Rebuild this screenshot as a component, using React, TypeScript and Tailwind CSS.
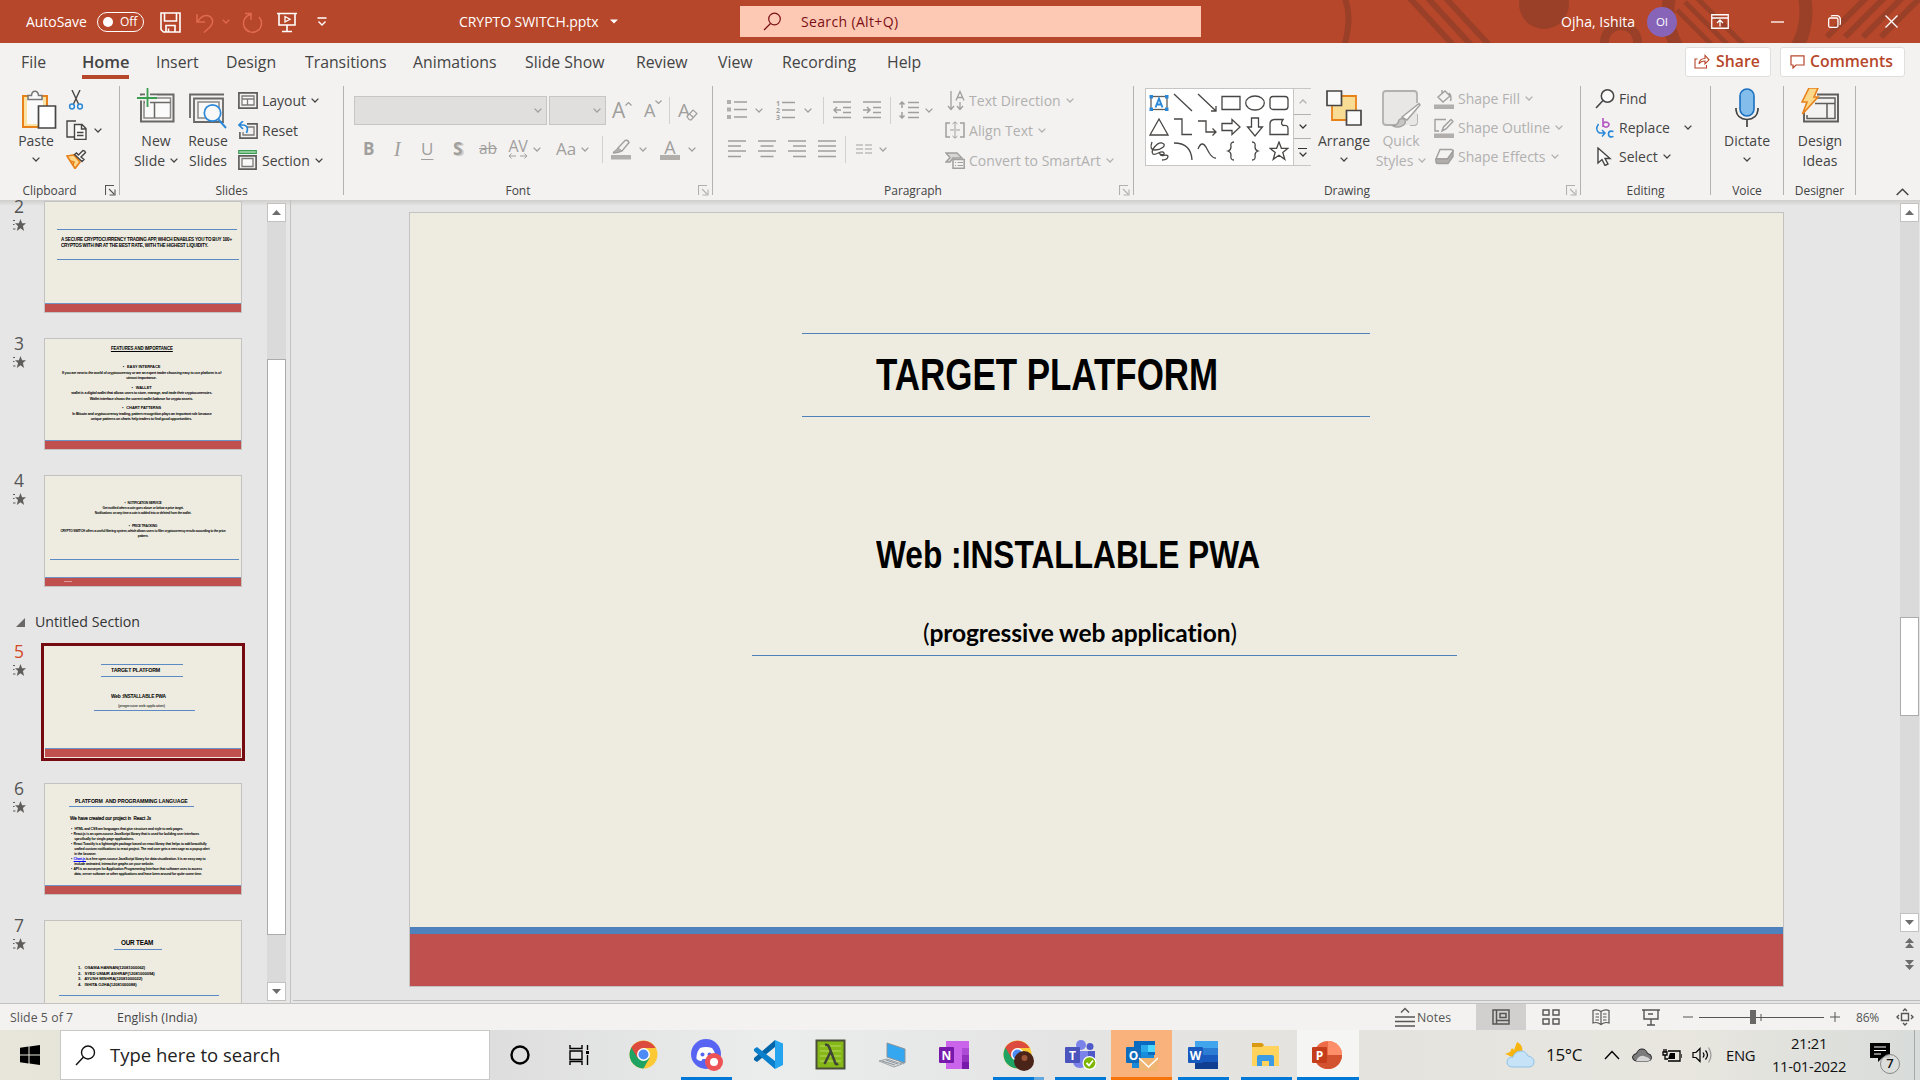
import type { ReactNode } from "react";

type SvgProps = { w: number; h: number; className?: string; children?: ReactNode };

function Svg({ w, h, className = "", children }: SvgProps) {
  return (
    <svg
      width={w}
      height={h}
      viewBox={`0 0 ${w} ${h}`}
      fill="none"
      stroke="currentColor"
      className={`block shrink-0 ${className}`}
      aria-hidden="true"
    >
      {children}
    </svg>
  );
}

function Chevron({ className = "" }: { className?: string }) {
  return (
    <Svg w={8} h={5} className={className}>
      <path d="M.6.6 4 4 7.4.6" strokeWidth="1.3" />
    </Svg>
  );
}

/* ---------- Title bar ---------- */

function TitleBar() {
  return (
    <header className="relative flex h-[43px] shrink-0 items-center overflow-hidden bg-[#b7472a] text-[14px] text-white">
      <svg className="pointer-events-none absolute top-0 right-0" width="580" height="43" viewBox="0 0 580 43" fill="none" stroke="#9a4029">
        <path d="M4-4C10 10 10 24 4 48M66-6l48 52M84-6l48 52M102-6l48 52" strokeWidth="6" />
        <circle cx="204" cy="4" r="25" fill="#9a4029" stroke="none" />
        <circle cx="281" cy="42" r="16.500" strokeWidth="9" />
        <circle cx="397" cy="12" r="69" strokeWidth="13" />
        <path d="M337 10l40 40M345 2l48 48M353-6l56 56" strokeWidth="5" />
        <path d="M487 37L530-6M505 37L548-6M523 37L566-6M541 37L584-6" strokeWidth="6" />
      </svg>
      <div className="relative flex w-full items-center">
        <span className="ml-[26px] w-[63px] tracking-[-0.05px] whitespace-nowrap">AutoSave</span>
        <span className="ml-[8px] flex h-[20px] w-[47px] items-center rounded-full border border-white pl-[5px] text-[12px]">
          <span className="mr-[7px] size-[10px] rounded-full bg-white" />
          Off
        </span>
        <Svg w={21} h={21} className="ml-[16px] mt-[2px]">
          <path d="M1 1h19v19H3.5L1 17.500zM4.500 1v8h12V1M6 20v-6.500h9V20M8.500 20v-3.500" strokeWidth="1.600" />
        </Svg>
        <Svg w={20} h={22} className="ml-[14px] mt-[2px] text-[#e06a4e]">
          <path d="M2 2v8h8M2.500 9.500C6 4 11 2 15 4.500c4 3 3 7.500 0 10.500l-6 5.500" strokeWidth="1.500" />
        </Svg>
        <Chevron className="ml-[7px] text-[#e06a4e]" />
        <Svg w={22} h={22} className="ml-[12px] mt-[2px] text-[#e06a4e]">
          <path d="M3 1.500h6V8M8.500 2.500A9 9 0 1 0 17 5" strokeWidth="1.500" />
        </Svg>
        <Svg w={20} h={21} className="ml-[13px] mt-[2px]">
          <path d="M0 1.500h20M2 1.500V13h16V1.500M10 13v6M5 19.500h10" strokeWidth="1.600" />
          <path d="M8 4.500v5.500l5-2.750z" strokeWidth="1.300" />
        </Svg>
        <Svg w={10} h={9} className="ml-[20px]">
          <path d="M.5 1h9M1.500 4.500 5 8l3.500-3.500" strokeWidth="1.400" />
        </Svg>
        <span className="ml-[132px] w-[143px] tracking-[-0.05px] whitespace-nowrap">CRYPTO SWITCH.pptx</span>
        <Svg w={8} h={5} className="ml-[8px]">
          <path d="M0 .5h8L4 4.500z" fill="currentColor" stroke="none" />
        </Svg>
        <div className="ml-[122px] flex h-[31px] w-[461px] items-center bg-[#fdc9b5] text-[#7c0f15]">
          <Svg w={19} h={19} className="ml-[23px]">
            <circle cx="11.500" cy="7" r="5.800" strokeWidth="1.200" />
            <path d="M7.500 11.500 1 18" strokeWidth="1.200" />
          </Svg>
          <span className="ml-[19px] tracking-[0.35px] whitespace-nowrap">Search (Alt+Q)</span>
        </div>
        <span className="ml-[360px] w-[74px] tracking-[0.05px] whitespace-nowrap">Ojha, Ishita</span>
        <span className="ml-[12px] flex size-[30px] items-center justify-center rounded-full bg-[#8764b8] text-[11.500px]">OI</span>
        <Svg w={18} h={15} className="ml-[34px]">
          <path d="M.75.75h16.500v13.500H.75zM.75 4h16.500M9 12.500V6.500M6 9l3-3 3 3" strokeWidth="1.300" />
        </Svg>
        <Svg w={13} h={2} className="ml-[42px]">
          <path d="M0 1h13" strokeWidth="1.300" />
        </Svg>
        <Svg w={13} h={13} className="ml-[44px]">
          <rect x=".65" y="3" width="9.300" height="9.300" rx="1.500" strokeWidth="1.300" />
          <path d="M3 1.200Q3.500.7 4.500.7H9a3.300 3.300 0 0 1 3.300 3.300v4.500q0 .8-.6 1.300" strokeWidth="1.300" />
        </Svg>
        <Svg w={13} h={13} className="ml-[44px]">
          <path d="M.5.5l12 12M12.500.5l-12 12" strokeWidth="1.300" />
        </Svg>
      </div>
    </header>
  );
}

const tabs = [
  { label: "File", width: "w-[61px]" },
  { label: "Home", width: "w-[74px]" },
  { label: "Insert", width: "w-[70px]" },
  { label: "Design", width: "w-[79px]" },
  { label: "Transitions", width: "w-[108px]" },
  { label: "Animations", width: "w-[112px]" },
  { label: "Slide Show", width: "w-[111px]" },
  { label: "Review", width: "w-[82px]" },
  { label: "View", width: "w-[64px]" },
  { label: "Recording", width: "w-[105px]" },
  { label: "Help", width: "w-[60px]" },
];

function TabRow() {
  return (
    <nav className="flex h-[37px] shrink-0 items-center pl-[21px] text-[15.800px] text-[#444]">
      {tabs.map((tab) => (
        <span key={tab.label} className={`${tab.width} flex h-full shrink-0 items-start whitespace-nowrap`}>
          {tab.label === "Home" ? (
            <b className="h-[36px] border-b-4 border-[#b7472a] pt-[7px] text-[16.500px] font-semibold tracking-[-0.1px]">{tab.label}</b>
          ) : (
            <span className="pt-[8px]">{tab.label}</span>
          )}
        </span>
      ))}
      <div className="ml-auto flex gap-[9px] pr-[15px] font-semibold text-[#b7472a]">
        <span className="flex h-[30px] w-[86px] items-center rounded-[3px] border border-[#e1dfdd] bg-white pl-[8px]">
          <Svg w={16} h={15} className="mr-[6px]">
            <path d="M3.500 5H1v9h11.500v-3M5 10c.3-4 2.500-5.500 6-5.500V1.500l4 4.300-4 4V7C8 7 6.500 7.500 5 10z" strokeWidth="1.100" />
          </Svg>
          Share
        </span>
        <span className="flex h-[30px] w-[125px] items-center rounded-[3px] border border-[#e1dfdd] bg-white pl-[9px]">
          <Svg w={15} h={14} className="mr-[5px]">
            <path d="M1 .8h13v9.200H6L3 13v-3H1z" strokeWidth="1.200" />
          </Svg>
          Comments
        </span>
      </div>
    </nav>
  );
}

/* ---------- Ribbon ---------- */

function Launcher({ dim = false }: { dim?: boolean }) {
  return (
    <Svg w={11} h={11} className={dim ? "text-[#b1b0af]" : "text-[#555]"}>
      <path d="M.5 10V.5H9M4 4l5 5M10 4.500V10H4.500" strokeWidth="1.100" />
    </Svg>
  );
}

type GroupProps = { label: string; width: string; launcher?: "on" | "dim"; children: ReactNode };

function Group({ label, width, launcher, children }: GroupProps) {
  return (
    <section className={`${width} flex shrink-0`}>
      <div className="flex min-w-0 flex-1 flex-col">
        <div className="flex h-[100px]">{children}</div>
        <div className={`relative flex h-[20px] items-center justify-center pt-[2px] text-[12px] tracking-[-0.05px] text-[#444] ${launcher ? "pr-[20px]" : ""}`}>
          {label}
          {launcher && (
            <span className="absolute top-[5px] right-[3px]">
              <Launcher dim={launcher === "dim"} />
            </span>
          )}
        </div>
      </div>
      <div className="mt-[6px] h-[109px] w-px bg-[#b3b2b1]" />
    </section>
  );
}

type BigProps = { icon: ReactNode; lines: string[]; chevron?: boolean; className?: string };

function BigButton({ icon, lines, chevron = false, className = "" }: BigProps) {
  return (
    <div className={`flex shrink-0 flex-col items-center pt-[8px] text-[14px] ${className}`}>
      <div className="flex h-[42px] items-start">{icon}</div>
      {lines.map((line, i) => (
        <span key={line} className="flex h-5 items-center gap-[5px] whitespace-nowrap">
          {line}
          {chevron && i === 1 && <Chevron />}
        </span>
      ))}
      {chevron && lines.length === 1 && <Chevron className="mt-[7px]" />}
    </div>
  );
}

type SmallProps = { icon: ReactNode; text: string; chevron?: boolean; gap?: string; className?: string };

function SmallButton({ icon, text, chevron = false, gap = "ml-[5px]", className = "h-[30px]" }: SmallProps) {
  return (
    <div className={`flex items-center text-[14px] whitespace-nowrap ${className}`}>
      <span className="flex w-[24px] justify-start">{icon}</span>
      {text}
      {chevron && <Chevron className={gap} />}
    </div>
  );
}

function ClipboardGroup() {
  return (
    <Group label="Clipboard" width="w-[120px]" launcher="on">
      <BigButton
        className="ml-[16px] w-[40px]"
        chevron
        lines={["Paste"]}
        icon={
          <Svg w={36} h={40} className="ml-[6px] mt-[2px]">
            <path d="M2 6h24v31H2z" fill="#fbe3a5" stroke="#e8811a" strokeWidth="2" />
            <path d="M6 9h16v25H6z" fill="#fafafa" stroke="none" />
            <path d="M7 9.500V5.500h3.500C11-.3 17-.3 17.500 5.500H21v4z" fill="#fafafa" stroke="#777" strokeWidth="1.500" />
            <path d="M17.500 16h17v22h-17z" fill="#fff" stroke="#484644" strokeWidth="1.700" />
          </Svg>
        }
      />
      <div className="ml-[10px] flex flex-col pt-[10px]">
        <Svg w={20} h={20}>
          <path d="M6 0l6.500 14M14 0L7.500 14" stroke="#484644" strokeWidth="1.400" />
          <circle cx="6" cy="16.500" r="2.400" stroke="#2b88d8" strokeWidth="1.500" />
          <circle cx="14" cy="16.500" r="2.400" stroke="#2b88d8" strokeWidth="1.500" />
        </Svg>
        <div className="mt-[10px] flex items-center">
          <Svg w={21} h={20} className="text-[#484644]">
            <path d="M8 17H1V1h9" strokeWidth="1.400" />
            <path d="M8.500 4.500h7.500l4 4v11H8.500zM15.500 4.500V9H20M11 12.500h6.500M11 15.500h6.500" fill="#fafafa" strokeWidth="1.400" />
          </Svg>
          <Chevron className="ml-[7px]" />
        </div>
        <Svg w={21} h={20} className="mt-[9px]">
          <path d="M1 7l7-1 6 7-5 6.500z" fill="#fbd88a" stroke="#e8811a" strokeWidth="1.700" />
          <path d="M4 12l4 1-1 3" stroke="#e8811a" strokeWidth="1.500" />
          <path d="M8.500 5.500l7.500 7 2-2-3-2.500 4.500-4.500q-.5-2-2.500-2L12.500 6 10.500 4z" fill="#fafafa" stroke="#484644" strokeWidth="1.400" />
        </Svg>
      </div>
    </Group>
  );
}

function SlidesGroup() {
  return (
    <Group label="Slides" width="w-[224px]">
      <BigButton
        className="ml-[11px] w-[50px]"
        chevron
        lines={["New", "Slide"]}
        icon={
          <Svg w={38} h={36}>
            <path d="M4 6.500h32.500v27H4z" stroke="#6a6866" strokeWidth="2" />
            <path d="M7 10h26.500v20H7z" fill="#fafafa" stroke="#8a8886" strokeWidth="1.500" />
            <path d="M7 14.500h26.500M17.500 14.500V30" stroke="#6a6866" strokeWidth="1.500" />
            <path d="M10.500 0v19M0 10h20" stroke="#f3f2f1" strokeWidth="5" />
            <path d="M10.500 0v19M0 10h20" stroke="#3c9e53" strokeWidth="1.800" />
          </Svg>
        }
      />
      <BigButton
        className="ml-[5px] w-[44px]"
        lines={["Reuse", "Slides"]}
        icon={
          <Svg w={38} h={36} className="mt-[5px]">
            <path d="M1 25V1.500h34" stroke="#6a6866" strokeWidth="1.800" />
            <path d="M5 29V5.500h29V29z" stroke="#6a6866" strokeWidth="1.800" />
            <path d="M9 9h21v16H9z" fill="#fafafa" stroke="#8a8886" strokeWidth="1.500" />
            <circle cx="23.500" cy="20" r="8.200" fill="#f8f8f8" stroke="#2b88d8" strokeWidth="1.700" />
            <path d="M29.500 26.500 37 35" stroke="#2b88d8" strokeWidth="1.900" />
          </Svg>
        }
      />
      <div className="ml-[8px] flex flex-col pt-[5px]">
        <SmallButton
          text="Layout"
          chevron
          icon={
            <Svg w={20} h={17}>
              <path d="M.9.9h18.200v15.200H.9z" stroke="#5f5d5b" strokeWidth="1.700" />
              <path d="M4 4h12v9H4zM4 7h12M9.500 7v6" fill="#fafafa" stroke="#7d7b79" strokeWidth="1.300" />
            </Svg>
          }
        />
        <SmallButton
          text="Reset"
          icon={
            <Svg w={20} h={18}>
              <path d="M9 2.900h10.100v14.200H1.900V11" stroke="#5f5d5b" strokeWidth="1.600" />
              <path d="M9 6h7v8H5v-3" stroke="#7d7b79" strokeWidth="1.300" />
              <path d="M5 0L1 4l4 4M1 4h4c4 0 5.500 3 3.500 8" stroke="#2b88d8" strokeWidth="1.700" />
            </Svg>
          }
        />
        <SmallButton
          text="Section"
          chevron
          icon={
            <Svg w={20} h={20}>
              <path d="M.7.7h17.600v2.600H.7z" fill="#a9d7b3" stroke="#3c9e53" strokeWidth="1.200" />
              <path d="M.9 5.900h17.200v13.200H.9z" stroke="#5f5d5b" strokeWidth="1.700" />
              <path d="M4 8.500h11v8H4z" fill="#fafafa" stroke="#7d7b79" strokeWidth="1.300" />
            </Svg>
          }
        />
      </div>
    </Group>
  );
}

function VLine({ className = "" }: { className?: string }) {
  return <span className={`h-[27px] w-px shrink-0 bg-[#d2d0ce] ${className}`} />;
}

function FontGroup() {
  return (
    <Group label="Font" width="w-[369px]" launcher="dim">
      <div className="flex flex-col pl-[10px] text-[#a19f9d]">
        <div className="mt-[15px] flex h-[30px] items-center">
          <div className="flex h-[29px] w-[193px] items-center justify-end border border-[#c8c6c4] bg-[#e0dfde] pr-[4px]">
            <Chevron />
          </div>
          <div className="ml-[2px] flex h-[29px] w-[57px] items-center justify-end border border-[#c8c6c4] bg-[#e0dfde] pr-[4px]">
            <Chevron />
          </div>
          <span className="ml-[6px] flex w-[32px] items-start text-[21px] leading-[22px]">
            A<Svg w={7} h={4} className="mt-[3px]"><path d="M.5 3.500l3-3 3 3" strokeWidth="1.200" /></Svg>
          </span>
          <span className="flex w-[25px] items-start text-[18px] leading-[24px]">
            A<Svg w={7} h={4} className="mt-[2px]"><path d="M.5.5l3 3 3-3" strokeWidth="1.200" /></Svg>
          </span>
          <VLine />
          <span className="ml-[8px] flex items-end text-[19px] leading-[22px]">
            A
            <Svg w={12} h={12} className="-ml-[4px]">
              <path d="M1 7.500L7 1l4 3.500L5 11 3 10.500z" fill="#f3f2f1" strokeWidth="1.200" />
              <path d="M3.500 5l4 3.500" strokeWidth="1.200" />
            </Svg>
          </span>
        </div>
        <div className="mt-[9px] flex h-[30px] items-center text-[17px]">
          <b className="ml-[9px] w-[31px]">B</b>
          <i className="w-[27px] font-['Liberation_Serif',serif] text-[20px]">I</i>
          <span className="w-[32px] underline underline-offset-[4px]">U</span>
          <b className="w-[26px] [text-shadow:2px_1px_1px_#c8c6c4]">S</b>
          <span className="w-[29px] text-[15.500px] line-through">ab</span>
          <span className="flex w-[20px] flex-col items-center text-[16px] leading-[14px] tracking-[-0.3px]">
            AV
            <Svg w={20} h={6}>
              <path d="M8 3H1m2.500-2.500L1 3l2.500 2.500M12 3h7m-2.500-2.500L19 3l-2.500 2.500" />
            </Svg>
          </span>
          <Chevron className="ml-[5px]" />
          <span className="ml-[15px] w-[24px] text-[17px]">Aa</span>
          <Chevron className="ml-[1px]" />
          <VLine className="ml-[13px]" />
          <Svg w={20} h={21} className="ml-[8px]">
            <path d="M0 16h20v4.500H0z" fill="#b1aeab" stroke="none" />
            <path d="M7 9L14 1.500q3-1 4 2L11 12l-5 1.500-4 .5 4-2z" strokeWidth="1.400" />
            <path d="M7 9l4 3-4 1.500H2z" fill="#b1aeab" />
          </Svg>
          <Chevron className="ml-[8px]" />
          <span className="ml-[13px] flex w-[20px] flex-col items-center text-[18px] leading-[16px]">
            A
            <span className="h-[5px] w-[20px] bg-[#b1aeab]" />
          </span>
          <Chevron className="ml-[8px]" />
        </div>
      </div>
    </Group>
  );
}

function Lines({ d, w = 18, className = "" }: { d: string; w?: number; className?: string }) {
  return (
    <Svg w={w} h={18} className={className}>
      <path d={d} strokeWidth="1.500" />
    </Svg>
  );
}

function ParagraphGroup() {
  return (
    <Group label="Paragraph" width="w-[421px]" launcher="dim">
      <div className="flex w-[232px] shrink-0 flex-col pl-[14px] text-[#a19f9d]">
        <div className="mt-[15px] flex h-[30px] items-center">
          <Svg w={20} h={20}>
            <path d="M0 0h4v4H0zM0 7.500h4v4H0zM0 15h4v4H0z" fill="#b1aeab" stroke="none" />
            <path d="M7 2h13M7 9.500h13M7 17h13" strokeWidth="1.500" />
          </Svg>
          <Chevron className="ml-[8px]" />
          <span className="ml-[13px] flex w-[6px] flex-col text-[7px] leading-[7px] font-bold">
            <span>1</span>
            <span>2</span>
            <span>3</span>
          </span>
          <Lines w={13} d="M0 1.500h13M0 9h13M0 16.500h13" />
          <Chevron className="ml-[9px]" />
          <VLine className="ml-[11px]" />
          <Lines className="ml-[9px]" d="M0 1h18M10 6.500h8M10 11.500h8M0 16.500h18M8 9H1m3-3L1 9l3 3" />
          <Lines className="ml-[12px]" d="M0 1h18M10 6.500h8M10 11.500h8M0 16.500h18M0 9h7M4 6l3 3-3 3" />
          <VLine className="ml-[9px]" />
          <Lines w={20} className="ml-[8px]" d="M9 1.500h11M9 6.500h11M9 11.500h11M9 16.500h11M3 1v6M.5 3.500L3 1l2.500 2.500M3 17v-6M.5 14.500L3 17l2.500-2.500" />
          <Chevron className="ml-[6px]" />
        </div>
        <div className="mt-[9px] flex h-[30px] items-center">
          <Lines className="ml-[1px]" d="M0 1h18M0 6h13M0 11h18M0 16.500h13" />
          <Lines className="ml-[12px]" d="M0 1h18M2.500 6h13M0 11h18M2.500 16.500h13" />
          <Lines className="ml-[12px]" d="M0 1h18M5 6h13M0 11h18M5 16.500h13" />
          <Lines className="ml-[12px]" d="M0 1h18M0 6h18M0 11h18M0 16.500h18" />
          <VLine className="ml-[9px]" />
          <Svg w={16} h={18} className="ml-[10px]">
            <path d="M0 5h7M0 9h7M0 13h7M9 5h7M9 9h7M9 13h7" strokeWidth="1.200" />
          </Svg>
          <Chevron className="ml-[7px]" />
        </div>
      </div>
      <div className="flex flex-col pt-[5px] tracking-[0.05px] text-[#b1b0af]">
        <SmallButton
          text="Text Direction"
          chevron
          icon={
            <Svg w={20} h={21} className="text-[#a19f9d]">
              <path d="M6 1v18M3 16l3 3.500L9 16M15 12v7M12 16l3 3.500 3-3.500M11 10.500l4-9 4 9M12.500 7.500h5" strokeWidth="1.300" />
            </Svg>
          }
        />
        <SmallButton
          text="Align Text"
          chevron
          icon={
            <Svg w={20} h={18} className="text-[#a19f9d]">
              <path d="M5 2H1v14h4M15 2h4v14h-4" strokeWidth="1.500" />
              <path d="M10 8V1M7.500 3L10 .8 12.500 3M10 10v7M7.500 15l2.500 2.200 2.500-2.200M5 9h10" />
            </Svg>
          }
        />
        <SmallButton
          text="Convert to SmartArt"
          chevron
          icon={
            <Svg w={20} h={17} className="text-[#a19f9d]">
              <path d="M1 1h11l5 5h-9l-3 4H1l4-4.500z" fill="#d8d6d4" strokeWidth="1.400" />
              <path d="M8 7.500h11.200v8.700H8z" fill="#f3f2f1" strokeWidth="1.500" />
              <path d="M10 10.500h1M12.500 10.500H18M10 13.500h1M12.500 13.500H18" />
            </Svg>
          }
        />
      </div>
    </Group>
  );
}

const shapes: ReactNode[] = [
  <>
    <rect x="2" y="3.500" width="16" height="13" stroke="#5f5d5b" strokeWidth="1.300" />
    <path d="M6.500 14.500l3.500-9 3.500 9M7.700 11.500h4.600" stroke="#2b88d8" strokeWidth="1.900" />
    <path d="M.5 2h3.500v3.500H.5zM16 2h3.500v3.500H16zM.5 14.500h3.500V18H.5zM16 14.500h3.500V18H16z" fill="#2b88d8" stroke="none" />
  </>,
  <path d="M1 1l18 17" />,
  <path d="M1 1l18 17M19 13v5h-5" />,
  <path d="M1 3.500h18v13H1z" />,
  <ellipse cx="10" cy="10" rx="9.300" ry="7" />,
  <rect x="1" y="3.500" width="18" height="13" rx="3" />,
  <path d="M10 2l9 16H1z" />,
  <path d="M1 2h8v15.500h10" />,
  <path d="M1 4h8v11h10M15.500 11.500L19 15l-3.500 3.500" />,
  <path d="M1 6.500h10V2.500l8 7.500-8 7.500v-4H1z" />,
  <path d="M6.500 1h7v9h4L10 19l-7.500-9h4z" />,
  <path d="M1 17.500V7q0-4 4-4.500h9q-3 4 0 6 5-1 5 3v6z" />,
  <path d="M3 1q-3 8 3 8C12 9 19 4 13 2 8 1 1 10 4 13c3 2 9-5 11-1 1 2-3 2-4 1 1 4 6-1 8 2 0 3-3 4-6 4" />,
  <path d="M1 2q17 0 18 17" />,
  <path d="M1 8Q5-2 10 8t9 9" />,
  <path d="M13 1q-4 0-3 5 0 3-3 4 3 1 3 4-1 5 3 5" />,
  <path d="M7 1q4 0 3 5 0 3 3 4-3 1-3 4 1 5-3 5" />,
  <path d="M10 1l2.400 6.300H19l-5.200 4.200 2 6.800L10 14.300l-5.800 4 2-6.800L1 7.300h6.600z" />,
];

function DrawingGroup() {
  return (
    <Group label="Drawing" width="w-[447px]" launcher="dim">
      <div className="ml-[11px] mt-[8px] flex h-[78px] w-[166px] shrink-0 border border-[#c8c6c4] bg-white">
        <div className="grid flex-1 grid-cols-[repeat(6,24px)] content-start gap-y-[4px] pl-[3px] pt-[4px] text-[#484644]">
          {shapes.map((shape, i) => (
            <Svg key={i} w={20} h={20}>
              <g strokeWidth="1.300">{shape}</g>
            </Svg>
          ))}
        </div>
        <div className="flex w-[18px] shrink-0 flex-col border-l border-[#c8c6c4] bg-[#f3f2f1] text-[#333]">
          <span className="flex h-[25px] items-center justify-center text-[#b1b0af]">
            <Chevron className="rotate-180" />
          </span>
          <span className="flex h-[25px] items-center justify-center border-y border-[#b3b2b1]">
            <Chevron />
          </span>
          <span className="flex flex-1 flex-col items-center justify-center gap-[3px]">
            <span className="h-px w-[9px] bg-[#333]" />
            <Chevron />
          </span>
        </div>
      </div>
      <BigButton
        className="ml-[5px] w-[56px]"
        chevron
        lines={["Arrange"]}
        icon={
          <Svg w={36} h={37} className="mt-[2px]">
            <path d="M6 6h24v24H6z" fill="#f9dc93" stroke="#e8811a" strokeWidth="1.800" />
            <path d="M1 1h14.500v14.500H1zM20.500 20.500H35V35H20.500z" fill="#fafafa" stroke="#484644" strokeWidth="1.700" />
          </Svg>
        }
      />
      <BigButton
        className="ml-[2px] w-[54px] text-[#b1b0af]"
        chevron
        lines={["Quick", "Styles"]}
        icon={
          <Svg w={39} h={39} className="mt-[2px]">
            <path d="M13 35H4q-3 0-3-3V4q0-3 3-3h28q3 0 3 3v9M35 24v8q0 3-3 3h-4" fill="#e8e7e6" strokeWidth="1.800" />
            <path d="M35 13v20q-1 2-3 2H13z" fill="#e8e7e6" stroke="none" />
            <path d="M11 36q5-1 6-6 3-3 6 0c2 5-6 9-12 6z" fill="#c8c6c4" stroke="#a19f9d" strokeWidth="1.300" />
            <path d="M20 27L37 13.500l1 1.500-13 15z" fill="#fafafa" stroke="#a19f9d" strokeWidth="1.400" />
          </Svg>
        }
      />
      <div className="ml-[6px] flex flex-col pt-[4px] text-[#b1b0af]">
        <SmallButton
          className="h-[29px]"
          text="Shape Fill"
          chevron
          icon={
            <Svg w={20} h={20} className="text-[#a19f9d]">
              <path d="M0 15.500h20V20H0z" fill="#b1aeab" stroke="none" />
              <path d="M4 8l7-6 5 5-7 6zM8 5V1M15 4q3 3 1.500 8" strokeWidth="1.400" />
            </Svg>
          }
        />
        <SmallButton
          className="h-[29px]"
          text="Shape Outline"
          chevron
          icon={
            <Svg w={20} h={20} className="text-[#a19f9d]">
              <path d="M0 15.500h20V20H0z" fill="#b1aeab" stroke="none" />
              <path d="M12 1.500H1V13h4M8 13l1.500-4L17 1.500l2 2L12 11z" strokeWidth="1.400" />
            </Svg>
          }
        />
        <SmallButton
          className="h-[29px]"
          text="Shape Effects"
          chevron
          icon={
            <Svg w={20} h={17} className="text-[#a19f9d]">
              <path d="M6 1.500h11.500q1.500.5 1.500 2L13.500 11H2z" fill="#f3f2f1" strokeWidth="1.400" />
              <path d="M2 11h11.500L19 3.500v5L14 15.500H3q-1.500-1-1-4.500z" fill="#b1aeab" strokeWidth="1.400" />
            </Svg>
          }
        />
      </div>
    </Group>
  );
}

function Ribbon() {
  return (
    <div className="flex h-[120px] shrink-0 text-[#444]">
      <ClipboardGroup />
      <SlidesGroup />
      <FontGroup />
      <ParagraphGroup />
      <DrawingGroup />
      <Group label="Editing" width="w-[130px]">
        <div className="ml-[14px] flex flex-col pt-[4px]">
          <SmallButton
            className="h-[29px]"
            text="Find"
            icon={
              <Svg w={20} h={20}>
                <circle cx="12.500" cy="7" r="6.200" fill="#fafafa" strokeWidth="1.500" />
                <path d="M8 11.500L1 19" strokeWidth="1.600" />
              </Svg>
            }
          />
          <SmallButton
            className="h-[29px]"
            text="Replace"
            chevron
            gap="ml-[14px]"
            icon={
              <Svg w={20} h={20}>
                <path d="M8 0v9M8 6.500a3 2.500 0 1 1 0 .1" stroke="#b55cc4" strokeWidth="1.700" />
                <path d="M18.500 13.500q-5-1.500-5 2.500t5 2.500" stroke="#2b88d8" strokeWidth="1.700" />
                <path d="M3.500 6q-4 6 1 9h5M7 12l3 3-3 3.500" stroke="#2b88d8" strokeWidth="1.500" />
              </Svg>
            }
          />
          <SmallButton
            className="h-[29px]"
            text="Select"
            chevron
            icon={
              <Svg w={20} h={19} className="ml-[2px]">
                <path d="M1 1v15l4-3.500 3 6 3-1.500-3-5.500h5z" fill="#fafafa" strokeWidth="1.400" />
              </Svg>
            }
          />
        </div>
      </Group>
      <Group label="Voice" width="w-[73px]">
        <BigButton
          className="w-[72px]"
          chevron
          lines={["Dictate"]}
          icon={
            <Svg w={24} h={39}>
              <rect x="5" y="1" width="14" height="27" rx="7" fill="#83bdec" stroke="#1a6fbf" strokeWidth="1.600" />
              <path d="M1 20v2q1 9 11 9.500Q22 31 23 22v-2M12 31.500V39" strokeWidth="1.700" />
            </Svg>
          }
        />
      </Group>
      <Group label="Designer" width="w-[72px]">
        <BigButton
          className="w-[72px]"
          lines={["Design", "Ideas"]}
          icon={
            <Svg w={38} h={35}>
              <path d="M3 24v9.500h34V6.500H16" stroke="#5f5d5b" strokeWidth="1.900" />
              <path d="M6 27v3.500h28V10H14M14 15.500h20M26 15.500v15" stroke="#5f5d5b" strokeWidth="1.500" />
              <path d="M8 0h9l-4 9h4L1.500 26 6 14H1z" fill="#fbd88a" stroke="#e8811a" strokeWidth="1.600" />
            </Svg>
          }
        />
      </Group>
      <Svg w={13} h={8} className="mt-[108px] ml-[40px]">
        <path d="M.7 7L6.500 1.200 12.300 7" strokeWidth="1.500" />
      </Svg>
    </div>
  );
}

/* ---------- Slide list ---------- */

function SlideStar() {
  return (
    <Svg w={13} h={12} className="text-[#5f5d5b]">
      <path d="M7.500 0l1.600 4.300H13L9.900 7l1.200 5-3.600-2.700L3.800 12 5 7 2 4.300h3.900z" fill="currentColor" stroke="none" />
      <path d="M0 1.500h2M0 5.500h1.500M0 10h2.500" />
    </Svg>
  );
}

type ThumbProps = { n: number; children: ReactNode; className?: string; selected?: boolean; tag?: boolean };

function Thumb({ n, children, className = "", selected = false, tag = false }: ThumbProps) {
  return (
    <div className={`flex shrink-0 ${className}`}>
      <div className="flex w-[44px] flex-col items-center pr-[6px]">
        <span className={`-mt-[6px] h-[24px] text-[17.500px] leading-[22px] ${selected ? "text-[#d24726]" : "text-[#555]"}`}>{n}</span>
        <SlideStar />
      </div>
      <div className={`flex h-[112px] w-[198px] flex-col overflow-hidden border bg-[#eeece1] font-['Liberation_Sans',Arial,sans-serif] text-black ${selected ? "border-[#eeece1] outline-3 outline-[#750b11]" : "border-[#c3c2c0]"}`}>
        <div className="flex flex-1 flex-col overflow-hidden">{children}</div>
        <div className="h-[9px] shrink-0 border-t border-[#6f93c4] bg-[#c0504d]">
          {tag && <span className="mt-[3px] ml-[19px] block h-px w-[8px] bg-[#dd9b99]" />}
        </div>
      </div>
    </div>
  );
}

function Rule({ className }: { className: string }) {
  return <div className={`h-px shrink-0 bg-[#5b8ac4] ${className}`} />;
}

// One line of miniature slide text
function Mini({ className = "", children }: { className?: string; children: ReactNode }) {
  return <div className={`w-max shrink-0 whitespace-pre ${className}`}>{children}</div>;
}

const features = [
  { mt: "mt-[12px]", head: "•   EASY INTERFACE", a: "If you are new to the world of cryptocurrency or are an expert trader choosing easy to use platform is of", b: "utmost importance." },
  { mt: "mt-[4px]", head: "•   WALLET", a: "wallet is a digital wallet that allows users to store, manage, and trade their cryptocurrencies.", b: "Wallet interface shows the current wallet balance for crypto assets." },
  { mt: "mt-[4px]", head: "•   CHART PATTERNS", a: "In Bitcoin and cryptocurrency trading, pattern recognition plays an important role because", b: "unique patterns on charts help traders to find good opportunities." },
];

const platformNotes = [
  "•   HTML and CSS are languages that give structure and style to web pages.",
  "•  React.js is an open-source JavaScript library that is used for building user interfaces",
  "    specifically for single-page applications.",
  "•  React Toastify is a lightweight package based on react library that helps to add beautifully",
  "    crafted custom notifications to react project. The end user gets a message as a popup alert",
  "    in the browser.",
  "•  Chart.js is a free open-source JavaScript library for data visualization. It is an easy way to",
  "    include animated, interactive graphs on your website.",
  "•  API is an acronym for Application Programming Interface that software uses to access",
  "    data, server software or other applications and have been around for quite some time.",
];

const team = ["1.   OSAMA HANNAN(12081000062)", "2.   SYED UMAIR ASHRAF(12081000094)", "3.   AYUSH MISHRA(12081000022)", "4.   ISHITA OJHA(12081000088)"];

function SlideList() {
  return (
    <aside className="flex w-[291px] shrink-0 border-r border-[#c3c2c0]">
      <div className="flex w-[267px] flex-col overflow-hidden pt-[1px]">
        <Thumb n={2}>
          <Rule className="mt-[27px] ml-[12px] w-[180px]" />
          <Mini className="mt-[6px] ml-[16px] h-[6px] origin-left scale-x-[0.855] text-[5.400px] leading-[6px] font-bold tracking-[-0.25px]">A SECURE CRYPTOCURRENCY TRADING APP, WHICH ENABLES YOU TO BUY 100+</Mini>
          <Mini className="ml-[16px] h-[6px] origin-left scale-x-[0.855] text-[5.400px] leading-[6px] font-bold tracking-[-0.25px]">CRYPTOS WITH INR AT THE BEST RATE, WITH THE HIGHEST LIQUIDITY.</Mini>
          <Rule className="mt-[11px] ml-[12px] w-[182px]" />
        </Thumb>
        <Thumb n={3} className="mt-[25px]">
          <Mini className="mt-[6px] -ml-[3px] scale-x-[0.84] self-center text-[5.200px] leading-[7px] font-bold tracking-[-0.1px] underline">FEATURES AND IMPORTANCE</Mini>
          {features.map((f) => (
            <div key={f.head} className={`${f.mt} flex flex-col items-center pr-[3px] text-[4px] leading-[5.500px] font-bold tracking-[-0.1px]`}>
              <Mini>{f.head}</Mini>
              <Mini className="scale-x-[0.93] tracking-[-0.25px]">{f.a}</Mini>
              <Mini className="scale-x-[0.93] tracking-[-0.25px]">{f.b}</Mini>
            </div>
          ))}
        </Thumb>
        <Thumb n={4} className="mt-[25px]" tag>
          <div className="mt-[25px] flex scale-x-[0.82] flex-col items-center text-[4px] leading-[4.800px] font-bold tracking-[-0.26px]">
            <Mini>•   NOTIFICATION SERVICE</Mini>
            <Mini>Get notified when a coin goes above or below a price target.</Mini>
            <Mini>Notifications on any time a coin is added into or deleted from the wallet.</Mini>
            <Mini className="mt-[9px]">•   PRICE TRACKING</Mini>
            <Mini>CRYPTO SWITCH offers a useful filtering system, which allows users to filter cryptocurrency results according to the price</Mini>
            <Mini>pattern.</Mini>
          </div>
          <Rule className="mt-[20px] ml-[5px] w-[189px]" />
        </Thumb>
        <div className="mt-[24px] flex h-[22px] shrink-0 items-center pl-[16px] text-[14.200px] text-[#333]">
          <Svg w={9} h={9} className="mr-[10px]">
            <path d="M9 0v9H0z" fill="#6a6866" stroke="none" />
          </Svg>
          Untitled Section
        </div>
        <Thumb n={5} className="mt-[13px]" selected>
          <Rule className="mt-[17px] ml-[56px] w-[82px]" />
          <Mini className="mt-[1px] ml-[66px] origin-left scale-x-[0.93] text-[5.700px] leading-[8px] font-bold tracking-[-0.2px]">TARGET PLATFORM</Mini>
          <Rule className="mt-[2px] ml-[56px] w-[82px]" />
          <Mini className="mt-[15px] ml-[66px] origin-left scale-x-[0.88] text-[5.500px] leading-[8px] font-bold tracking-[-0.22px]">Web :INSTALLABLE PWA</Mini>
          <Mini className="mt-[3px] ml-[73px] origin-left scale-x-[0.92] text-[4.200px] leading-[6px] tracking-[-0.12px]">(progressive web application)</Mini>
          <Rule className="mt-[1px] ml-[49px] w-[101px]" />
        </Thumb>
        <Thumb n={6} className="mt-[25px]">
          <Mini className="mt-[13px] ml-[30px] origin-left scale-x-[0.93] text-[5.600px] leading-[8px] font-bold tracking-[-0.1px]">PLATFORM  AND PROGRAMMING LANGUAGE</Mini>
          <Rule className="mt-[1px] ml-[24px] w-[125px]" />
          <Mini className="mt-[7px] ml-[25px] origin-left scale-x-[0.885] text-[5.200px] leading-[8px] tracking-[-0.05px] [-webkit-text-stroke:0.2px_black]">We have created our project in  React Js</Mini>
          <div className="mt-[4px] ml-[26px] flex w-max origin-left scale-x-[0.91] flex-col text-[3.900px] leading-[5px] font-bold tracking-[-0.22px]">
            {platformNotes.map((note) =>
              note.includes("Chart.js") ? (
                <Mini key={note}>
                  •  <a className="text-[#0000ff] underline">Chart.js </a>
                  {note.slice(12)}
                </Mini>
              ) : (
                <Mini key={note}>{note}</Mini>
              ),
            )}
          </div>
        </Thumb>
        <Thumb n={7} className="mt-[25px]">
          <Mini className="mt-[17px] ml-[76px] text-[6.400px] leading-[9px] font-bold tracking-[-0.25px]">OUR TEAM</Mini>
          <Rule className="mt-[2px] ml-[69px] w-[48px]" />
          <div className="mt-[15px] ml-[33px] flex flex-col text-[4.200px] leading-[5.600px] font-bold tracking-[-0.1px]">
            {team.map((member) => (
              <Mini key={member}>{member}</Mini>
            ))}
          </div>
          <Rule className="mt-[8px] ml-[14px] w-[160px]" />
        </Thumb>
      </div>
      <div className="mt-[3px] mb-[2px] flex w-[19px] flex-col bg-[#dadada]">
        <ScrollButton d="M0 5L4.500 0 9 5z" />
        <div className="mt-[137px] h-[576px] border border-[#ababab] bg-white" />
        <div className="mt-auto">
          <ScrollButton d="M0 0L4.500 5 9 0z" />
        </div>
      </div>
    </aside>
  );
}

function ScrollButton({ d }: { d: string }) {
  return (
    <span className="flex h-[19px] w-[19px] shrink-0 items-center justify-center border border-[#c3c2c0] bg-white">
      <Svg w={9} h={5}>
        <path d={d} fill="#6d6d6d" stroke="none" />
      </Svg>
    </span>
  );
}

/* ---------- Slide canvas ---------- */

function SlideCanvas() {
  return (
    <main className="flex min-w-0 flex-1 flex-col">
      <div className="flex h-[800px]">
        <div className="flex w-[1609px] pt-[12px] pl-[118px]">
          <div className="flex h-[775px] w-[1375px] flex-col border border-[#c3c2c0] bg-[#eeece1] font-['Liberation_Sans',Arial,sans-serif] whitespace-nowrap text-black">
            <div className="mt-[120px] ml-[392px] flex h-[84px] w-[568px] items-center border-y border-[#4f81bd] pl-[74px]">
              <h1 className="w-[430px] origin-left scale-x-[0.794] text-[44px] leading-[50px] font-bold">TARGET PLATFORM</h1>
            </div>
            <h2 className="mt-[114px] ml-[466px] w-[480px] origin-left scale-x-[0.802] text-[39.500px] leading-[46px] font-bold">Web :INSTALLABLE PWA</h2>
            <div className="mt-[36px] ml-[342px] h-[43px] w-[705px] border-b border-[#4f81bd] pl-[171px] font-[Lato,sans-serif] text-[24.600px] leading-[40px] font-bold tracking-[-0.1px] [font-variant-ligatures:none]">
              <span className="font-normal">(</span>progressive web application<span className="font-normal">)</span>
            </div>
            <div className="mt-auto h-[59px] border-t-[7px] border-[#4f81bd] bg-[#c0504d]" />
          </div>
        </div>
        <div className="mt-[3px] flex w-[19px] flex-col">
          <div className="flex h-[729px] flex-col bg-[#dadada]">
            <ScrollButton d="M0 5L4.500 0 9 5z" />
            <div className="mt-[395px] h-[99px] border border-[#ababab] bg-white" />
            <div className="mt-auto">
              <ScrollButton d="M0 0L4.500 5 9 0z" />
            </div>
          </div>
          <Svg w={9} h={10} className="mt-[6px] ml-[5px]">
            <path d="M0 5L4.500 0 9 5zM0 10l4.500-5L9 10z" fill="#6d6d6d" stroke="none" />
          </Svg>
          <Svg w={9} h={10} className="mt-[12px] ml-[5px]">
            <path d="M0 0l4.500 5L9 0zM0 5l4.500 5L9 5z" fill="#6d6d6d" stroke="none" />
          </Svg>
        </div>
      </div>
      <div className="ml-[2px] h-px bg-[#bdbdbd]" />
    </main>
  );
}

/* ---------- Status bar ---------- */

function StatusBar() {
  return (
    <footer className="flex h-[27px] shrink-0 items-center border-t border-[#c3c2c0] bg-[#f3f2f1] text-[12.300px] tracking-[0.05px] text-[#555]">
      <span className="ml-[10px] w-[107px] pt-[2px]">Slide 5 of 7</span>
      <span className="pt-[2px] text-[#444]">English (India)</span>
      <div className="ml-auto flex h-full items-center pr-[6px]">
        <Svg w={20} h={20}>
          <path d="M0 10h20M0 14.500h20M0 19h20M6 5.500L10 1.500l4 4" strokeWidth="1.400" />
        </Svg>
        <span className="ml-[2px] w-[59px] pt-[2px]">Notes</span>
        <span className="flex h-full w-[50px] items-center justify-center bg-[#d2d0ce]">
          <Svg w={18} h={16}>
            <path d="M1 1h16v14H1zM4.500 1v14M4.500 11.500H17M8 4.500h6v4H8z" strokeWidth="1.500" />
          </Svg>
        </span>
        <Svg w={18} h={16} className="ml-[16px]">
          <path d="M1 1h6v5H1zM11 1h6v5h-6zM1 10h6v5H1zM11 10h6v5h-6z" strokeWidth="1.400" />
        </Svg>
        <Svg w={18} h={17} className="ml-[32px]">
          <path d="M9 2.500Q5 0 1 1.500V14q4-1.500 8 1.500 4-3 8-1.500V1.500Q13 0 9 2.500V16M3.500 5H7M3.500 8H7M3.500 11H7M11 5h3.500M11 8h3.500M11 11h3.500" strokeWidth="1.200" />
        </Svg>
        <Svg w={18} h={17} className="ml-[32px]">
          <path d="M0 1h18M2 1v9h14V1M9 10v6M5 16h8M6 5h5" strokeWidth="1.400" />
        </Svg>
        <Svg w={157} h={16} className="ml-[23px]">
          <path d="M0 8h10M16 8.500h125M78 5v7M147 8h10M152 3v10" strokeWidth="1" />
          <path d="M67 1h6v14h-6z" fill="#6a6866" stroke="none" />
        </Svg>
        <span className="ml-[16px] w-[40px] pt-[2px] text-[12px] tracking-[-0.2px]">86%</span>
        <Svg w={18} h={18}>
          <path d="M5.500 5.500h7v7h-7zM7 3l2-2 2 2M7 15l2 2 2-2M3 7L1 9l2 2M15 7l2 2-2 2" strokeWidth="1.400" />
        </Svg>
      </div>
    </footer>
  );
}

/* ---------- Taskbar ---------- */

function ChromeLogo({ children }: { children?: ReactNode }) {
  return (
    <Svg w={32} h={32}>
      <g stroke="none">
        <circle cx="15.500" cy="15.500" r="14" fill="#fcc934" />
        <path d="M15.500 15.500L3.400 8.500A14 14 0 0 0 15.500 29.500l6-10.500z" fill="#1ea362" />
        <path d="M3.400 8.500A14 14 0 0 1 27.600 9H15.500L9.500 19z" fill="#dd4b3e" />
        <circle cx="15.500" cy="15.500" r="6.500" fill="#fff" />
        <circle cx="15.500" cy="15.500" r="5" fill="#4c8bf5" />
        {children}
      </g>
    </Svg>
  );
}

function LetterTile({ letter, color }: { letter: string; color: string }) {
  return (
    <>
      <rect x="0" y="8" width="15" height="16" rx="1" fill={color} />
      <text x="7.500" y="20.500" textAnchor="middle" fill="#fff" fontSize="12" fontWeight="700" fontFamily="Open Sans, sans-serif">
        {letter}
      </text>
    </>
  );
}

const apps: { id: string; width: string; bar: string; bg?: string; icon: ReactNode }[] = [
  { id: "chrome", width: "w-[62px]", bar: "", icon: <ChromeLogo /> },
  {
    id: "discord",
    width: "w-[63px]",
    bar: "w-[51px] bg-[#0078d7]",
    icon: (
      <Svg w={32} h={32}>
        <g stroke="none">
          <circle cx="15" cy="15" r="15" fill="#5865f2" />
          <path d="M9 9q6-2 12 0 4 5 3.500 11-3 2.500-5 2l-1-2h-7l-1 2q-2 .5-5-2Q5 14 9 9z" fill="#fff" />
          <circle cx="11.500" cy="15.500" r="2" fill="#5865f2" />
          <circle cx="18.500" cy="15.500" r="2" fill="#5865f2" />
          <circle cx="23" cy="23" r="9" fill="#ed5356" />
          <circle cx="23" cy="23" r="4" fill="#fff" />
        </g>
      </Svg>
    ),
  },
  {
    id: "vscode",
    width: "w-[62px]",
    bar: "",
    icon: (
      <Svg w={32} h={32}>
        <g stroke="none">
          <path d="M22 1v7L4 23l-3-2v-2z" fill="#0065a9" />
          <path d="M1 10l3-2 18 14v8L1 12z" fill="#0a7fcb" />
          <path d="M22 1l8 3.500v21.500L22 30z" fill="#25a4f0" />
        </g>
      </Svg>
    ),
  },
  {
    id: "lambda",
    width: "w-[62px]",
    bar: "",
    icon: (
      <Svg w={32} h={32}>
        <path d="M1.500 1.500h28v28h-28z" fill="#86b817" stroke="#4a4f3a" strokeWidth="2" />
        <path d="M5 7h21M5 12h21M5 17h21M5 22h21" stroke="#b8d766" strokeWidth="1.200" />
        <path d="M10 6q3-1 4.500 3l6 15.500q1 1.500 2.500 0M15.500 13L9.500 25" stroke="#3f4435" strokeWidth="2.500" />
      </Svg>
    ),
  },
  {
    id: "pc",
    width: "w-[62px]",
    bar: "",
    icon: (
      <Svg w={32} h={32}>
        <path d="M10 4l18 6v14l-18-6z" fill="#35a7f0" stroke="#8a949c" />
        <path d="M2 22l8-2 15 5-8 3z" fill="#dcdcdc" stroke="#9aa3a8" />
        <path d="M5 22l13 4M9 21l12 4M22 22l5 3" stroke="#8a949c" />
      </Svg>
    ),
  },
  {
    id: "onenote",
    width: "w-[62px]",
    bar: "",
    icon: (
      <Svg w={32} h={32}>
        <g stroke="none">
          <path d="M7 2h23v28H7z" fill="#ca64ea" />
          <path d="M23 9h7v7h-7z" fill="#ae4bd5" />
          <path d="M23 16h7v7h-7z" fill="#9332bf" />
          <path d="M23 23h7v7h-7z" fill="#7719aa" />
          <LetterTile letter="N" color="#7719aa" />
        </g>
      </Svg>
    ),
  },
  {
    id: "chrome-profile",
    width: "w-[64px]",
    bar: "w-[51px] border-r-[10px] border-[#62a7e0] bg-[#0078d7]",
    icon: (
      <ChromeLogo>
        <circle cx="22" cy="22" r="10" fill="#4a2418" />
        <circle cx="22.500" cy="19" r="3" fill="#9c5537" />
      </ChromeLogo>
    ),
  },
  {
    id: "teams",
    width: "w-[61px]",
    bar: "w-[51px] bg-[#0078d7]",
    icon: (
      <Svg w={32} h={32}>
        <g stroke="none">
          <circle cx="16" cy="6" r="5" fill="#7b83eb" />
          <circle cx="25" cy="7.500" r="3.500" fill="#5059c9" />
          <path d="M21 12h9v9q-1 5-6 5h-3z" fill="#5059c9" />
          <path d="M8 12h15v10q-1 7-8 7t-7-7z" fill="#7b83eb" />
          <LetterTile letter="T" color="#4b53bc" />
          <circle cx="24.500" cy="24" r="7" fill="#fff" />
          <circle cx="24.500" cy="24" r="5.800" fill="#7db700" />
        </g>
        <path d="M21.500 24l2.500 2.500 4-5" stroke="#fff" strokeWidth="1.800" />
      </Svg>
    ),
  },
  {
    id: "outlook",
    width: "w-[61px]",
    bar: "w-[61px] bg-[#f7740b]",
    bg: "bg-[#fab27c]",
    icon: (
      <Svg w={32} h={32}>
        <g stroke="none">
          <path d="M8 2h21v14H8z" fill="#0a6abf" />
          <path d="M15 6h7v7h-7z" fill="#28a8ea" />
          <path d="M22 6h7v7h-7z" fill="#50d9ff" />
          <path d="M15 13h7v7h-7z" fill="#1490df" />
          <path d="M6 16h22v13H6z" fill="#1a8ad8" />
          <LetterTile letter="O" color="#0f6cbd" />
          <path d="M13 19h19v13H13z" fill="#f0b573" />
        </g>
        <path d="M13 19l9.500 9L32 19" stroke="#fff" strokeWidth="1.400" />
      </Svg>
    ),
  },
  {
    id: "word",
    width: "w-[63px]",
    bar: "w-[51px] bg-[#0078d7]",
    icon: (
      <Svg w={32} h={32}>
        <g stroke="none">
          <path d="M7 2h23v7H7z" fill="#41a5ee" />
          <path d="M7 9h23v7H7z" fill="#2b7cd3" />
          <path d="M7 16h23v7H7z" fill="#185abd" />
          <path d="M7 23h23v7H7z" fill="#103f91" />
          <LetterTile letter="W" color="#185abd" />
        </g>
      </Svg>
    ),
  },
  {
    id: "explorer",
    width: "w-[62px]",
    bar: "w-[51px] bg-[#0078d7]",
    icon: (
      <Svg w={32} h={32}>
        <g stroke="none">
          <path d="M2 4h10l2 3h15v20H2z" fill="#ffd35c" />
          <path d="M2 4h10l2 2-2 2H2z" fill="#d99a12" />
          <path d="M7 27V18q0-2 2-2h13q2 0 2 2v9h-5v-5h-7v5z" fill="#3b9be5" />
        </g>
      </Svg>
    ),
  },
  {
    id: "powerpoint",
    width: "w-[62px]",
    bar: "w-[62px] bg-[#0078d7]",
    bg: "bg-[#f5f5f3]",
    icon: (
      <Svg w={32} h={32}>
        <g stroke="none">
          <circle cx="16" cy="16" r="14" fill="#ed6c47" />
          <path d="M16 2a14 14 0 0 1 14 14H16z" fill="#ff8f6b" />
          <path d="M2 16h28a14 14 0 0 1-28 0z" fill="#d35230" />
          <LetterTile letter="P" color="#c43e1c" />
        </g>
      </Svg>
    ),
  },
];

function Taskbar() {
  return (
    <div className="flex h-[50px] shrink-0 items-center bg-[linear-gradient(90deg,#e8e6da_0%,#e4e3da_8%,#dddedd_26%,#ebecec_40%,#e4e4e4_55%,#e4e3de_70%,#e8e6df_88%,#d8dcda_100%)] text-[#111]">
      <Svg w={20} h={20} className="ml-[20px]">
        <path d="M0 2.800L8.500 1.600v7.900H0zM9.500 1.500L20 0v9.500H9.500zM0 10.500h8.500v7.900L0 17.200zM9.500 10.500H20V20L9.500 18.500z" fill="#000" stroke="none" />
      </Svg>
      <div className="ml-[20px] flex h-[50px] w-[430px] items-center border border-[#c8c8c6] bg-white">
        <Svg w={21} h={21} className="ml-[14px]">
          <circle cx="13" cy="7.500" r="6.500" strokeWidth="1.400" />
          <path d="M8.500 12L1 20" strokeWidth="1.400" />
        </Svg>
        <span className="ml-[14px] text-[18.500px] text-[#222]">Type here to search</span>
      </div>
      <Svg w={20} h={20} className="ml-[20px]">
        <circle cx="10" cy="10" r="8.500" stroke="#000" strokeWidth="2.400" />
      </Svg>
      <Svg w={21} h={20} className="ml-[39px]">
        <path d="M1 0v3.500h12V0M1 6h12v8.500H1zM1 20v-3.500h12V20M18.500 0v5M18.500 10v10" stroke="#000" strokeWidth="1.400" />
        <path d="M17 6h3v3h-3z" fill="#000" stroke="none" />
      </Svg>
      <div className="ml-[23px] flex h-full">
        {apps.map((app) => (
          <div key={app.id} className={`${app.width} ${app.bg ?? ""} relative flex shrink-0 items-center justify-center`}>
            {app.icon}
            {app.bar && <span className={`absolute bottom-0 h-[3px] ${app.bar}`} />}
          </div>
        ))}
      </div>
      <div className="ml-auto flex h-full items-center">
        <Svg w={30} h={26}>
          <path d="M12 0c5 2 7 8 4 12s-9 4-13 1l-3-1 5-2 2-4 2 2z" fill="#f9b50f" stroke="none" />
          <path d="M8 25q-6 0-6-5 0-5 6-5 2-6 8-6 5 0 7 5 6 1 6 6 0 5-6 5z" fill="#c6e2f7" stroke="#8fc3ea" />
        </Svg>
        <span className="ml-[11px] w-[58px] text-[17px] tracking-[-0.3px]">15°C</span>
        <Svg w={16} h={10}>
          <path d="M1 9l7-7.500L15 9" stroke="#000" strokeWidth="1.400" />
        </Svg>
        <Svg w={20} h={14} className="ml-[12px]">
          <path d="M4 13q-3.500-.5-3.500-4 .5-3 4-3.500Q6 1 10 1t5.500 4.500q4 .5 4 4t-3.500 3.500z" fill="#7c7c7c" stroke="#222" />
          <path d="M4 13q3-6 8-5 4 1 7 4l-3 1z" fill="#d5d5d5" stroke="none" />
        </Svg>
        <Svg w={20} h={14} className="ml-[10px]">
          <path d="M6 3h12v10H6M20 6v4M1 4h4v3H1zM2 1v3M4 1v3M3 7v4h3" stroke="#000" strokeWidth="1.300" />
          <path d="M8 5h5v6H6z" fill="#000" stroke="none" />
        </Svg>
        <Svg w={20} h={18} className="ml-[10px]">
          <path d="M1 6.500h3l4-4v13l-4-4H1zM11 6.500q2 2.500 0 5M13.500 4.500q4 4.500 0 9" stroke="#000" strokeWidth="1.200" />
          <path d="M16.500 1.500q5 7.500 0 15" stroke="#999" strokeWidth="1.200" />
        </Svg>
        <span className="ml-[14px] w-[33px] text-[14.800px] tracking-[-0.3px]">ENG</span>
        <div className="ml-[12px] flex w-[76px] flex-col items-center text-[14.800px] leading-[23px] tracking-[-0.3px] whitespace-nowrap">
          <span>21:21</span>
          <span>11-01-2022</span>
        </div>
        <div className="relative ml-[23px] h-[36px] w-[30px] pt-[5px]">
          <Svg w={20} h={20}>
            <path d="M0 1h20v15h-8l-4 4v-4H0z" fill="#000" stroke="none" />
            <path d="M4 5h12M4 8.500h12M4 12h7" stroke="#fff" strokeWidth="1.200" />
          </Svg>
          <span className="absolute right-0 bottom-[-1px] flex size-[20px] items-center justify-center rounded-full border border-[#888] bg-[#dcdedc]/90 text-[13px] font-semibold">7</span>
        </div>
        <div className="ml-[14px] h-full w-px bg-[#a5a8a6]" />
        <div className="w-[5px]" />
      </div>
    </div>
  );
}

export default function App() {
  return (
    <div className="flex h-[1080px] w-[1920px] flex-col overflow-hidden bg-[#f3f2f1] font-['Open_Sans','Noto_Sans',sans-serif]">
      <TitleBar />
      <TabRow />
      <Ribbon />
      <div className="flex h-[803px] shrink-0 bg-[#e6e6e6] bg-[linear-gradient(#cfcecd,#e6e6e6_6px)]">
        <SlideList />
        <SlideCanvas />
      </div>
      <StatusBar />
      <Taskbar />
    </div>
  );
}
